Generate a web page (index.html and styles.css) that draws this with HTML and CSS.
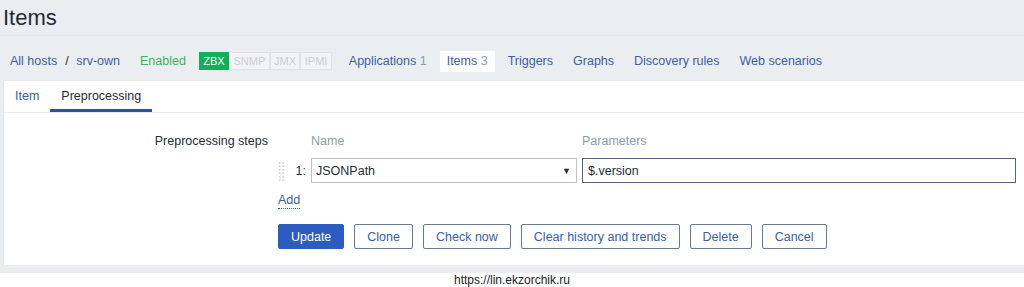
FILE: index.html
```html
<!DOCTYPE html>
<html lang="en">
<head>
<meta charset="UTF-8">
<meta name="viewport" content="width=device-width, initial-scale=1.0">
<title>Items</title>
<link rel="stylesheet" href="styles.css">
</head>
<body>

  <div class="title-bar">
    <h1>Items</h1>
  </div>

  <nav class="host-nav">
    <a class="crumb" href="#">All hosts</a>
    <span class="sep">/</span>
    <a class="crumb" href="#">srv-own</a>
    <span class="status-on">Enabled</span>
    <span class="avail">
      <span class="badge on">ZBX</span><span class="badge">SNMP</span><span class="badge">JMX</span><span class="badge">IPMI</span>
    </span>
    <ul class="host-links">
      <li><a href="#">Applications</a> <span class="count">1</span></li>
      <li class="current"><a href="#">Items</a> <span class="count">3</span></li>
      <li><a href="#">Triggers</a></li>
      <li><a href="#">Graphs</a></li>
      <li><a href="#">Discovery rules</a></li>
      <li><a href="#">Web scenarios</a></li>
    </ul>
  </nav>

  <div class="panel">
    <ul class="tabs">
      <li><a href="#">Item</a></li>
      <li class="active"><a href="#">Preprocessing</a></li>
    </ul>

    <div class="form">
      <div class="form-label">Preprocessing steps</div>
      <div class="form-field">
        <div class="steps">
          <span></span>
          <span class="col-head">Name</span>
          <span class="col-head">Parameters</span>

          <span class="step-num"><i class="drag"></i>1:</span>
          <div class="select">JSONPath<span class="arrow">&#9660;</span></div>
          <div class="text-input">$.version</div>
        </div>
        <a class="link-add" href="#">Add</a>
      </div>

      <div></div>
      <div class="buttons">
        <button class="btn primary">Update</button>
        <button class="btn">Clone</button>
        <button class="btn">Check now</button>
        <button class="btn">Clear history and trends</button>
        <button class="btn">Delete</button>
        <button class="btn">Cancel</button>
      </div>
    </div>
  </div>

  <div class="watermark">https://lin.ekzorchik.ru</div>

</body>
</html>
```

FILE: styles.css
```css
* {
  box-sizing: border-box;
}

body {
  margin: 0;
  background-color: #ebeef0;
  color: #1f2c33;
  font-family: "Liberation Sans", Arial, sans-serif;
  font-size: 12.5px;
}

a {
  color: #3b5ea8;
  text-decoration: none;
}

ul {
  margin: 0;
  padding: 0;
  list-style: none;
}

.title-bar {
  height: 36px;
  padding-left: 3px;
  border-bottom: 1px solid #e3e6e8;
}

.title-bar h1 {
  margin: 0;
  font-size: 22px;
  font-weight: normal;
  line-height: 35px;
  color: #1f2c33;
}

.host-nav {
  display: flex;
  align-items: center;
  height: 24px;
  margin-top: 13px;
  padding-left: 10px;
}

.sep {
  margin: 0 7.5px 0 8px;
  color: #1f2c33;
}

.status-on {
  margin-left: 20px;
  color: #3fae5d;
}

.avail {
  display: flex;
  margin-left: 13px;
}

.badge {
  height: 18px;
  padding: 0 3.4px;
  border: 1px solid #dfe4e7;
  background: #f2f4f5;
  color: #c9cfd3;
  font-size: 11px;
  line-height: 16px;
}

.badge.on {
  background: #10b15a;
  border-color: #10b15a;
  color: #fff;
}

.host-links {
  display: flex;
  margin-left: 10px;
}

.host-links li {
  padding: 0 7px;
  margin-right: 6px;
  height: 21px;
  line-height: 21px;
}

.host-links li.current {
  background: #fff;
}

.host-links .count {
  color: #8f9ca4;
}

.panel {
  margin-top: 8px;
  margin-left: 3px;
  background: #fff;
  border-left: 1px solid #e3e6e8;
}

.tabs {
  display: flex;
  height: 32px;
  border-bottom: 1px solid #ebeef0;
}

.tabs li {
  padding: 0 11px;
  line-height: 30px;
}

.tabs li.active {
  border-bottom: 3px solid #2c4f9e;
}

.tabs li.active a {
  color: #1f2c33;
}

.form {
  display: grid;
  grid-template-columns: 264px 1fr;
  column-gap: 10px;
  padding: 16px 0;
}

.form-label {
  text-align: right;
  line-height: 24px;
}

.steps {
  display: grid;
  grid-template-columns: 28px 266px 434px;
  grid-template-rows: 24px 25px;
  column-gap: 5px;
  row-gap: 5px;
}

.col-head {
  line-height: 24px;
  color: #8f9ca4;
}

.step-num {
  display: flex;
  align-items: center;
  justify-content: space-between;
  color: #1f2c33;
}

.drag {
  width: 7px;
  height: 20px;
  background-image: radial-gradient(circle, #cfd5d9 1px, transparent 1.2px);
  background-size: 3.5px 3.5px;
}

.select {
  display: flex;
  justify-content: space-between;
  align-items: center;
  padding: 0 5px 0 4px;
  border: 1px solid #bcc3c8;
  color: #1f2c33;
}

.arrow {
  font-size: 9px;
  color: #1f2c33;
}

.text-input {
  display: flex;
  align-items: center;
  padding: 0 5px;
  border: 1px solid #56627e;
  color: #1f2c33;
}

.link-add {
  display: inline-block;
  margin-top: 9px;
  line-height: 16px;
  border-bottom: 1px dotted #3b5ea8;
}

.buttons {
  display: flex;
  gap: 10px;
  margin-top: 15px;
}

.btn {
  height: 25px;
  padding: 0 12px;
  border: 1px solid #6a7891;
  border-radius: 2px;
  background: #fff;
  color: #3b5ea8;
  font-family: inherit;
  font-size: 12.5px;
}

.btn.primary {
  background: #2d5cc0;
  border-color: #2d5cc0;
  color: #fff;
}

.watermark {
  margin-top: 8px;
  padding-bottom: 10px;
  background: #fff;
  text-align: center;
  font-size: 12px;
  line-height: 14px;
  color: #222;
}
```
